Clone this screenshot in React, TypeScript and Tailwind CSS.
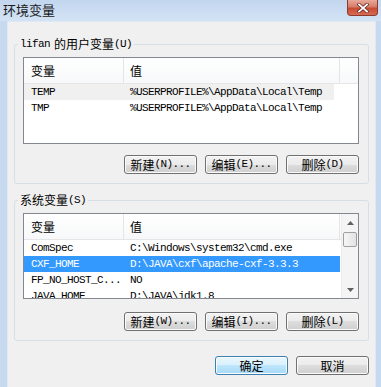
import React from "react";

const mono = "font-['Liberation_Mono',monospace] text-[11px] tracking-[-0.6px]";
const cjk = "font-['Noto_Sans_CJK_SC','Noto_Sans',sans-serif]";

type Row = { name: string; value: string; state?: "selected" | "soft" };

const userVars: Row[] = [
  { name: "TEMP", value: "%USERPROFILE%\\AppData\\Local\\Temp", state: "soft" },
  { name: "TMP", value: "%USERPROFILE%\\AppData\\Local\\Temp" },
];

const sysVars: Row[] = [
  { name: "ComSpec", value: "C:\\Windows\\system32\\cmd.exe" },
  { name: "CXF_HOME", value: "D:\\JAVA\\cxf\\apache-cxf-3.3.3", state: "selected" },
  { name: "FP_NO_HOST_C...", value: "NO" },
  { name: "JAVA_HOME", value: "D:\\JAVA\\jdk1.8" },
];

function Arrow({ up }: { up?: boolean }) {
  return (
    <svg width="7" height="4" viewBox="0 0 7 4">
      {up ? (
        <path d="M0 4 L3.5 0 L7 4 Z" fill="#606060" />
      ) : (
        <path d="M0 0 L3.5 4 L7 0 Z" fill="#606060" />
      )}
    </svg>
  );
}

function ScrollBar() {
  return (
    <div className="w-[17px] flex flex-col bg-[#f4f4f4] border-l border-[#ececec]">
      <div className="h-[17px] flex items-center justify-center">
        <Arrow up />
      </div>
      <div className="mx-[1px] mt-[1px] h-[15px] rounded-[2px] border border-[#a0a0a0] bg-[linear-gradient(90deg,#f6f6f6,#e2e2e2)]" />
      <div className="flex-1" />
      <div className="h-[17px] flex items-center justify-center">
        <Arrow />
      </div>
    </div>
  );
}

function VarList({ rows, height, scroll }: { rows: Row[]; height: string; scroll?: boolean }) {
  return (
    <div className={`${height} border border-[#828790] bg-white flex overflow-hidden`}>
      <div className="flex-1 flex flex-col min-w-0">
        <div className={`h-[26px] shrink-0 flex border-b border-[#e5e5e5] bg-[linear-gradient(#ffffff,#f7f8f9)] text-[12px] ${cjk}`}>
          <div className="w-[100px] pl-[7px] flex items-center border-r border-[#e5e5e5]">变量</div>
          <div className="w-[216px] pl-[6px] flex items-center border-r border-[#e5e5e5]">值</div>
          <div className="flex-1" />
        </div>
        {rows.map((r) => (
          <div
            key={r.name}
            className={`h-[16px] shrink-0 flex items-center whitespace-nowrap ${mono} ${
              r.state === "selected"
                ? "w-[316px] bg-[#3399ff] text-white"
                : r.state === "soft"
                ? "w-[310px] bg-[#f0f0f0] text-black"
                : "w-[316px] text-black"
            }`}
          >
            <div className="w-[100px] pl-[7px] overflow-hidden">{r.name}</div>
            <div className="pl-[6px]">{r.value}</div>
          </div>
        ))}
      </div>
      {scroll && <ScrollBar />}
    </div>
  );
}

function Btn({ label, hint, primary }: { label: string; hint?: string; primary?: boolean }) {
  return (
    <button
      className={`w-[73px] h-[19px] rounded-[3px] border flex items-center justify-center text-[12px] text-black shadow-[inset_0_0_0_1px_#fbfbfb] ${
        primary
          ? "border-[#3c7fb1] bg-[linear-gradient(#eaf6fd_0%,#d9f0fc_50%,#bee6fd_50%,#a7d9f5_100%)]"
          : "border-[#707070] bg-[linear-gradient(#f2f2f2_0%,#ebebeb_50%,#dddddd_50%,#cfcfcf_100%)]"
      }`}
    >
      <span className={cjk}>{label}</span>
      {hint && <span className={`${mono} text-[10px]`}>{hint}</span>}
    </button>
  );
}

function Group({ children, title }: { children: React.ReactNode; title: React.ReactNode }) {
  return (
    <fieldset className="mx-[6px] border border-[#d5dfe5] rounded-[3px] pl-[8px] pr-[9px] pt-[5px] pb-[9px]">
      <legend className="-ml-[5px] px-[2px] h-[16px] flex items-center text-[12px]">{title}</legend>
      {children}
    </fieldset>
  );
}

export default function App() {
  return (
    <div className={`w-[381px] h-[387px] bg-[#c6d9ef] flex flex-col overflow-hidden ${cjk}`}>
      {/* title bar */}
      <div className="h-[21px] shrink-0 flex items-start justify-between pl-[3px] pr-[3px] bg-[linear-gradient(#c2d6ee,#d3e3f5)]">
        <span className="mt-[2px] text-[13px] leading-[16px] text-[#1a1a1a]">环境变量</span>
        <div className="w-[31px] h-[16px] rounded-b-[4px] border border-t-0 border-[#8d3a2c] bg-[linear-gradient(#e9a99a_0%,#d77d6a_45%,#c74a34_55%,#d86c54_100%)] flex items-center justify-center">
          <svg width="12" height="10" viewBox="0 0 12 10">
            <path d="M2 1.5 L10 8.5 M10 1.5 L2 8.5" stroke="#6b2a1f" strokeWidth="3.4" strokeLinecap="square" />
            <path d="M2 1.5 L10 8.5 M10 1.5 L2 8.5" stroke="#ffffff" strokeWidth="1.8" strokeLinecap="square" />
          </svg>
        </div>
      </div>

      {/* client */}
      <div className="flex-1 ml-[7px] mr-[5px] bg-[#f0f0f0] border border-b-0 border-[#dfe9f5] flex flex-col pt-[14px]">
        <Group
          title={
            <>
              <span className={mono}>lifan</span>
              <span className="ml-[4px]">的用户变量</span>
              <span className={mono}>(U)</span>
            </>
          }
        >
          <VarList rows={userVars} height="h-[87px]" />
          <div className="mt-[11px] flex justify-end gap-[8px]">
            <Btn label="新建" hint="(N)..." />
            <Btn label="编辑" hint="(E)..." />
            <Btn label="删除" hint="(D)" />
          </div>
        </Group>

        <div className="mt-[8px]">
          <Group
            title={
              <>
                <span>系统变量</span>
                <span className={mono}>(S)</span>
              </>
            }
          >
            <VarList rows={sysVars} height="h-[86px]" scroll />
            <div className="mt-[13px] flex justify-end gap-[8px]">
              <Btn label="新建" hint="(W)..." />
              <Btn label="编辑" hint="(I)..." />
              <Btn label="删除" hint="(L)" />
            </div>
          </Group>
        </div>

        <div className="mt-[15px] mr-[6px] flex justify-end gap-[8px]">
          <Btn label="确定" primary />
          <Btn label="取消" />
        </div>
      </div>
    </div>
  );
}
